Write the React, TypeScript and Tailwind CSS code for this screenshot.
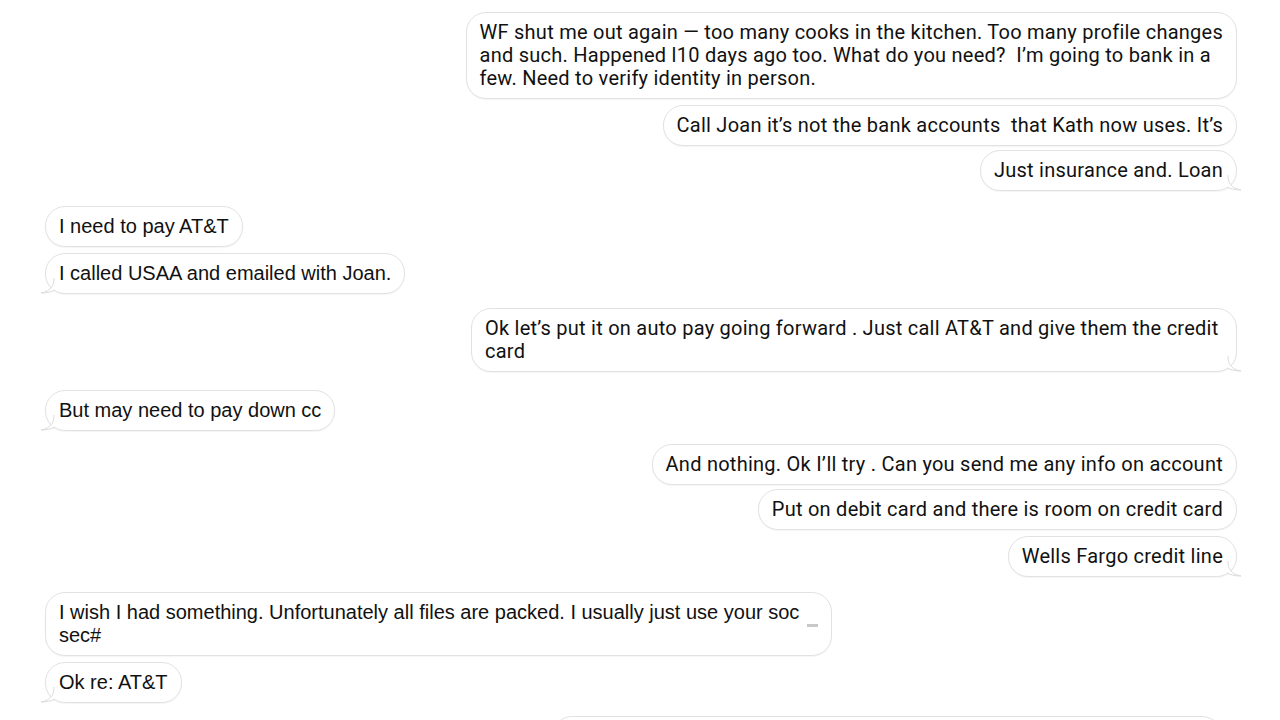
import type { ReactNode } from 'react'

type Side = 'left' | 'right'

// small curved tail hanging off the bottom outer corner of a bubble
function Tail({ side }: { side: Side }) {
  if (side === 'right') {
    return (
      <svg
        className="absolute -right-[8px] -bottom-[1px]"
        width="18"
        height="16"
        viewBox="0 0 18 16"
      >
        <path d="M2 0 C2 8 5 13 15 15 C9 15 5 14 1 12" fill="#ffffff" stroke="#dcdcdc" strokeWidth="1" />
      </svg>
    )
  }
  return (
    <svg
      className="absolute -left-[8px] -bottom-[1px]"
      width="18"
      height="16"
      viewBox="0 0 18 16"
    >
      <path d="M16 0 C16 8 13 13 3 15 C9 15 13 14 17 12" fill="#ffffff" stroke="#dcdcdc" strokeWidth="1" />
    </svg>
  )
}

function Bubble({
  side,
  tail,
  className = '',
  children,
}: {
  side: Side
  tail?: boolean
  className?: string
  children: ReactNode
}) {
  const font =
    side === 'right'
      ? "font-['Roboto',sans-serif] text-[20px] tracking-[0.25px]"
      : "font-['Liberation_Sans',sans-serif] text-[20px]"
  return (
    <div
      className={`relative whitespace-pre rounded-[20px] border border-[#e2e2e2] bg-white px-[13px] py-[8px] leading-[23px] text-[#111] shadow-[0_1px_1px_rgba(0,0,0,0.04)] ${font} ${className}`}
    >
      {children}
      {tail && <Tail side={side} />}
    </div>
  )
}

export default function App() {
  return (
    <div className="h-[720px] w-[1280px] overflow-hidden bg-white">
      <div className="flex flex-col pl-[45px] pr-[43px] pt-[12px]">
        {/* their side */}
        <div className="flex flex-col items-end">
          <Bubble side="right">
            {'WF shut me out again — too many cooks in the kitchen. Too many profile changes\nand such. Happened l10 days ago too. What do you need?  I’m going to bank in a\nfew. Need to verify identity in person.'}
          </Bubble>
          <Bubble side="right" className="mt-[6px]">
            {'Call Joan it’s not the bank accounts  that Kath now uses. It’s'}
          </Bubble>
          <Bubble side="right" tail className="mt-[4px]">
            Just insurance and. Loan
          </Bubble>
        </div>

        <div className="mt-[15px] flex flex-col items-start">
          <Bubble side="left">I need to pay AT&amp;T</Bubble>
          <Bubble side="left" tail className="mt-[6px]">
            I called USAA and emailed with Joan.
          </Bubble>
        </div>

        <div className="mt-[14px] flex flex-col items-end">
          <Bubble side="right" tail className="w-[766px]">
            {'Ok let’s put it on auto pay going forward . Just call AT&T and give them the credit\ncard'}
          </Bubble>
        </div>

        <div className="mt-[18px] flex flex-col items-start">
          <Bubble side="left" tail>
            But may need to pay down cc
          </Bubble>
        </div>

        <div className="mt-[13px] flex flex-col items-end">
          <Bubble side="right">And nothing. Ok I’ll try . Can you send me any info on account</Bubble>
          <Bubble side="right" className="mt-[4px]">
            Put on debit card and there is room on credit card
          </Bubble>
          <Bubble side="right" tail className="mt-[6px]">
            Wells Fargo credit line
          </Bubble>
        </div>

        <div className="mt-[15px] flex flex-col items-start">
          <Bubble side="left" className="w-[787px]">
            {'I wish I had something. Unfortunately all files are packed. I usually just use your soc\nsec#'}
            <span className="absolute right-[13px] top-[31px] h-[3px] w-[11px] bg-[#c8c8c8]" />
          </Bubble>
          <Bubble side="left" tail className="mt-[6px]">
            Ok re: AT&amp;T
          </Bubble>
        </div>

        <div className="mt-[13px] flex flex-col items-end pr-[15px]">
          <div className="h-[40px] w-[670px] rounded-[20px] border border-[#e2e2e2] bg-white" />
        </div>
      </div>
    </div>
  )
}
